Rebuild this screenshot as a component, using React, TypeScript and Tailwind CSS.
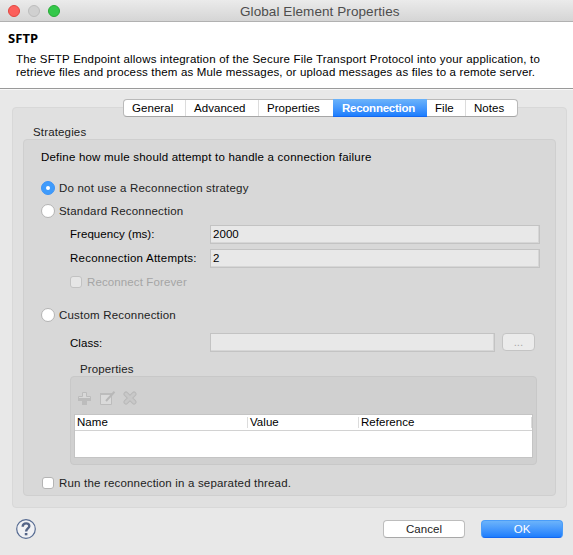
import React from "react";

function Label({ children, className = "" }: { children: React.ReactNode; className?: string }) {
  return <span className={`whitespace-pre ${className}`}>{children}</span>;
}

function Radio({ checked = false, label }: { checked?: boolean; label: string }) {
  return (
    <div className="flex h-[14px] items-center">
      <span
        className={`flex size-[14px] shrink-0 items-center justify-center rounded-full border ${
          checked ? "border-[#3b93f8] bg-[#3f9bfb]" : "border-[#b4b4b4] bg-white"
        }`}
      >
        {checked && <span className="size-1 rounded-full bg-white" />}
      </span>
      <Label className="ml-1 tracking-[0.2px] text-[#222]">{label}</Label>
    </div>
  );
}

function Field({ value = "", className }: { value?: string; className: string }) {
  return (
    <div className={`flex h-[19px] items-center border border-[#c3c3c3] bg-[#e8e8e8] pl-[2px] shadow-[inset_-1px_-1px_0_#d6d6d6] ${className}`}>
      <Label>{value}</Label>
    </div>
  );
}

const tabs = [
  { label: "General", cls: "w-[62px] h-4 pl-[8px] border-r border-[#dcdcdc]" },
  { label: "Advanced", cls: "w-[73px] h-4 pl-[8px] border-r border-[#dcdcdc]" },
  { label: "Properties", cls: "w-[74px] h-4 pl-[8px]" },
  {
    label: "Reconnection",
    cls: "w-[94px] h-[18px] pl-[9px] pt-px font-bold text-white tracking-[-0.25px] bg-linear-to-b from-[#6bb3fa] to-[#1c7dfd] -mt-px border-b border-[#1467f0]",
  },
  { label: "File", cls: "w-[39px] h-4 pl-[8px] border-r border-[#dcdcdc]" },
  { label: "Notes", cls: "w-[52px] h-4 pl-[8px]" },
];

export default function App() {
  return (
    <div className="flex h-[555px] w-[573px] flex-col overflow-hidden bg-[#e8e8e8] font-['Liberation_Sans',Arial,sans-serif] text-[11.5px] leading-[13px] tracking-[0.05px] text-black">
      <header className="flex h-[22px] shrink-0 items-center border-b border-[#b1b1b1] bg-linear-to-b from-[#ebebeb] to-[#d5d5d5] pl-2">
        <div className="flex gap-2">
          <span className="size-3 rounded-full border border-[#e2463f] bg-[#fc605c]" />
          <span className="size-3 rounded-full border border-[#bdbdbd] bg-[#d0d0d0]" />
          <span className="size-3 rounded-full border border-[#27aa35] bg-[#34c84a]" />
        </div>
        <Label className="mt-[2px] ml-[180px] text-[13.5px] tracking-[0.08px] text-[#4d4d4d]">Global Element Properties</Label>
      </header>

      <section className="h-[67px] shrink-0 border-b border-[#999] bg-white pt-[9px]">
        <h1 className="ml-2 h-[14px] font-['Noto_Sans',sans-serif] text-[13px] leading-[14px] font-bold">SFTP</h1>
        <p className="mt-[8px] ml-4 whitespace-pre">
          <span className="tracking-[0.193px]">The SFTP Endpoint allows integration of the Secure File Transport Protocol into your application, to</span>
          <br />
          <span className="tracking-[0.16px]">retrieve files and process them as Mule messages, or upload messages as files to a remote server.</span>
        </p>
      </section>
      <div className="h-px shrink-0 bg-[#f8f8f8]" />

      <main className="mx-3 mt-[17px] h-[401px] w-[555px] shrink-0 rounded border border-[#d8d8d8] bg-[#e0e0e0] px-[10px]">
        <nav className="-mt-[9px] ml-[100px] flex h-[18px] w-[395px] rounded border border-[#b9b9b9] border-b-[#a6a6a6] bg-white">
          {tabs.map((t) => (
            <div key={t.label} className={`flex shrink-0 items-center ${t.cls}`}>
              <Label>{t.label}</Label>
            </div>
          ))}
        </nav>

        <Label className="mt-[9px] ml-[10px] block h-[13px] tracking-[0.15px] text-[#222]">Strategies</Label>

        <section className="h-[357px] w-[533px] rounded border border-[#cfcfcf] bg-[#d8d8d8] pl-[17px]">
          <Label className="mt-[11px] block h-[13px] tracking-[0.21px]">Define how mule should attempt to handle a connection failure</Label>
          <div className="mt-[17px] flex flex-col gap-[9px]">
            <Radio checked label="Do not use a Reconnection strategy" />
            <Radio label="Standard Reconnection" />
          </div>
          <div className="mt-[7px] ml-[29px] flex flex-col gap-[5px]">
            <div className="flex items-center">
              <Label className="w-[140px]">Frequency (ms):</Label>
              <Field value="2000" className="w-[330px]" />
            </div>
            <div className="flex items-center">
              <Label className="w-[140px] tracking-[0.24px]">Reconnection Attempts:</Label>
              <Field value="2" className="w-[330px]" />
            </div>
          </div>
          <div className="mt-[8px] ml-[29px] flex h-3 items-center">
            <span className="size-3 rounded-[3px] border border-[#c2c2c2] bg-[#e6e6e6]" />
            <Label className="ml-[5px] tracking-[0.12px] text-[#a5a5a5]">Reconnect Forever</Label>
          </div>
          <div className="mt-[20px]">
            <Radio label="Custom Reconnection" />
          </div>
          <div className="mt-[11px] ml-[29px] flex">
            <Label className="w-[140px] pt-[4px]">Class:</Label>
            <Field className="w-[285px]" />
            <button className="ml-[7px] flex h-[18px] w-[33px] items-center justify-center rounded border border-[#c4c4c4] bg-[#ebebeb] text-[#aaa]">...</button>
          </div>
          <Label className="mt-[11px] ml-[39px] block h-[13px] tracking-[0.12px] text-[#222]">Properties</Label>
          <div className="ml-[29px] h-[89px] w-[467px] rounded border border-[#c8c8c8] bg-[#d0d0d0] px-[3px]">
            <div className="flex h-[37px] items-start gap-2 pt-[14px] pl-[4px]">
              <svg width="14" height="14" viewBox="0 0 14 14">
                <path d="M4.5 1.5h4v4h4v4h-4v4h-4v-4h-4v-4h4z" fill="#d8d8d8" stroke="#bcbcbc" />
                <path d="M0 7h13v3H9v4H4v-4H0z" fill="#bcbcbc" />
              </svg>
              <svg width="16" height="14" viewBox="0 0 16 14">
                <path d="M.5 2.500h11v11H.5z" fill="#dadada" stroke="#bcbcbc" />
                <path d="M0 2h12v2H0z" fill="#bcbcbc" />
                <path d="M6 10 14.500 .8" stroke="#b8b8b8" strokeWidth="2" />
              </svg>
              <svg className="-ml-px" width="14" height="14" viewBox="0 0 14 14">
                <path d="m3 3 8 8M11 3l-8 8" stroke="#b9b9b9" strokeWidth="5" strokeLinecap="round" />
                <path d="m3 3 8 8M11 3l-8 8" stroke="#c8c8c8" strokeWidth="3" strokeLinecap="round" />
              </svg>
            </div>
            <div className="h-[44px] w-[459px] border border-[#c4c4c4] bg-white">
              <div className="flex h-4 items-center border-b border-[#d2d2d2]">
                <Label className="w-[172px] pl-[2px]">Name</Label>
                <span className="h-[11px] w-px bg-[#dcdcdc]" />
                <Label className="w-[110px] pl-[2px]">Value</Label>
                <span className="h-[11px] w-px bg-[#dcdcdc]" />
                <Label className="w-[172px] pl-[2px]">Reference</Label>
                <span className="h-[11px] w-px bg-[#dcdcdc]" />
              </div>
            </div>
          </div>
          <div className="mt-[12px] ml-px flex h-3 items-center">
            <span className="size-3 rounded-[3px] border border-[#b4b4b4] bg-white" />
            <Label className="ml-[5px] tracking-[0.18px] text-[#222]">Run the reconnection in a separated thread.</Label>
          </div>
        </section>
      </main>

      <footer className="mt-[11px] flex items-start pl-4">
        <svg width="20" height="20" viewBox="0 0 20 20">
          <circle cx="10" cy="10" r="9.300" fill="#f0f1f4" stroke="#566b92" strokeWidth="1.200" />
          <path d="M6.700 7.700C6.800 3.300 13.500 3.300 13.300 7.200 13.200 9.400 10.100 9.600 10.100 12.600" fill="none" stroke="#536487" strokeWidth="2.400" />
          <path d="M8.800 14h2.600v2.300H8.800z" fill="#536487" />
        </svg>
        <button className="mt-[1px] ml-[347px] flex h-[18px] w-[82px] items-center justify-center rounded border border-[#bdbdbd] border-b-[#a8a8a8] bg-white text-[#222]">
          <Label>Cancel</Label>
        </button>
        <button className="mt-[1px] ml-4 flex h-[18px] w-[82px] items-center justify-center rounded border border-[#4a9df9] border-b-[#1467f0] bg-linear-to-b from-[#6bb3fa] to-[#1c7dfd] text-white">
          <Label>OK</Label>
        </button>
      </footer>
    </div>
  );
}
